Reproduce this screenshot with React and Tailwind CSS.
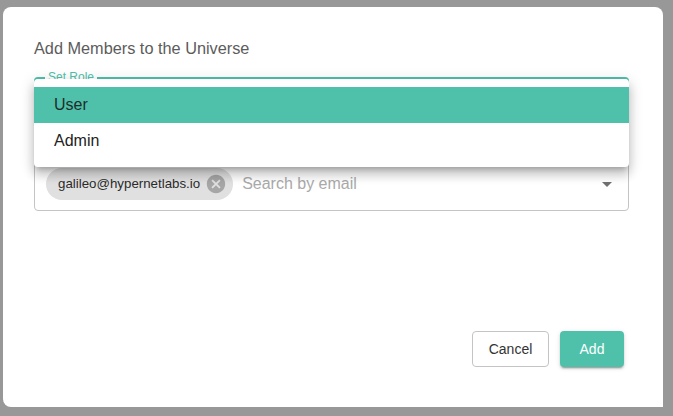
const teal = 'bg-[#4fc1ab]'

const App = () => {
  return (
    <div className="w-[673px] h-[416px] bg-[#989898] overflow-hidden pt-[7px] pl-[3px] font-['Liberation_Sans','Helvetica','Arial',sans-serif]">
      <div className="w-[660px] h-[400px] bg-white rounded-[8px] rounded-br-none flex flex-col pt-[29px] pl-[31px] pr-[34px] pb-[40px]">
        <h2 className="text-[16.3px] leading-[24px] text-[#5c5c5c]">Add Members to the Universe</h2>

        <div className="relative mt-[17px] h-[56px] border-2 border-[#4fc1ab] rounded-[4px]">
          <span className="absolute -top-[9px] left-[9px] px-[3px] bg-white text-[12px] leading-[14px] text-[#4fc1ab]">Set Role</span>
          <div className="absolute top-0 -left-[2px] -right-[2px] z-10 bg-white rounded-[4px] py-[8px] shadow-[0_5px_5px_-3px_rgba(0,0,0,0.2),0_8px_10px_1px_rgba(0,0,0,0.14),0_3px_14px_2px_rgba(0,0,0,0.12)]">
            <div className={`${teal} h-[36px] flex items-center px-[20px] text-[16px] text-[#1f2d2a]`}>User</div>
            <div className="h-[36px] flex items-center px-[20px] text-[16px] text-[#222]">Admin</div>
          </div>
        </div>

        <div className="mt-[23px] h-[55px] border border-[#c4c4c4] rounded-[4px] flex items-center pl-[11px] pr-[9px]">
          <div className="h-[32px] rounded-full bg-[#e0e0e0] flex items-center pl-[12px] pr-[6px]">
            <span className="text-[13.3px] text-[#2b2b2b]">galileo@hypernetlabs.io</span>
            <svg viewBox="0 0 24 24" className="w-[22px] h-[22px] ml-[5px] fill-[#a6a6a6]">
              <path d="M12 2C6.47 2 2 6.47 2 12s4.47 10 10 10 10-4.47 10-10S17.53 2 12 2zm5 13.59L15.59 17 12 13.41 8.41 17 7 15.59 10.59 12 7 8.41 8.41 7 12 10.59 15.59 7 17 8.41 13.41 12 17 15.59z" />
            </svg>
          </div>
          <span className="ml-[9px] text-[16px] text-[#aaaaaa] flex-1">Search by email</span>
          <svg viewBox="0 0 24 24" className="w-[24px] h-[24px] fill-[#707070]">
            <path d="M7 10l5 5 5-5z" />
          </svg>
        </div>

        <div className="mt-auto flex justify-end gap-[11px] pr-[5px]">
          <button className="h-[36px] w-[77px] border border-[#c4c4c4] rounded-[4px] text-[14px] text-[#333] bg-white">Cancel</button>
          <button className={`h-[36px] w-[64px] ${teal} rounded-[4px] text-[14px] text-white shadow-[0_3px_1px_-2px_rgba(0,0,0,0.2),0_2px_2px_0_rgba(0,0,0,0.14),0_1px_5px_0_rgba(0,0,0,0.12)]`}>Add</button>
        </div>
      </div>
    </div>
  )
}

export default App
